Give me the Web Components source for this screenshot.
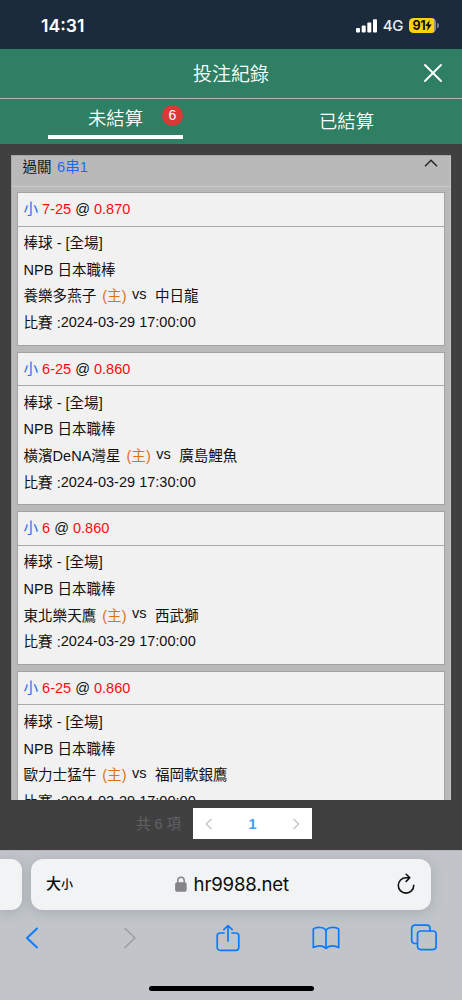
<!DOCTYPE html>
<html lang="zh-Hant">
<head>
<meta charset="utf-8">
<meta name="viewport" content="width=device-width, initial-scale=1">
<title>投注紀錄</title>
<style>
  html, body { margin: 0; height: 100%; overflow: hidden; }
  body { font: 14.55px "Liberation Sans", "Noto Sans CJK TC", sans-serif; }
</style>
</head>
<body>
<bet-app></bet-app>

<script>
(function () {
  // small base: every element just renders its template into an open root
  class Base extends HTMLElement {
    connectedCallback() {
      if (this.shadowRoot) return;
      this.attachShadow({ mode: 'open' }).innerHTML = this.render();
    }
    attr(n) { return this.getAttribute(n) || ''; }
  }

  class StatusBar extends Base {
    render() {
      return `
        <style>
          :host { display:flex; box-sizing:border-box; height:49px; flex:none; background:#1b2b3c; color:#fff;
                  padding:2px 23px 0 41px; justify-content:space-between; align-items:center;
                  font-family:Inter,sans-serif; }
          .time { font-size:17.6px; font-weight:600; }
          .right { display:flex; align-items:center; }
          .net { font-size:15px; font-weight:500; margin:0 6px 0 6px; letter-spacing:-.4px; color:#e9ecee; }
          .bat { display:flex; align-items:center; justify-content:center; width:27px; height:15px; border-radius:4.5px;
                 background:linear-gradient(90deg,#fdd20b 91%,#8d9085 91%); color:#111; font-size:12.5px; font-weight:700; letter-spacing:-.3px; }
          .cap { width:2px; height:5px; margin-left:1px; border-radius:0 2px 2px 0; background:#76808a; }
          svg { display:block; }
        </style>
        <span class="time">14:31</span>
        <div class="right">
          <svg width="21" height="14" viewBox="0 0 21 14" fill="#fff">
            <rect x="0" y="9" width="4" height="4.6" rx="1"/><rect x="5.7" y="6.6" width="4" height="7" rx="1"/>
            <rect x="11.3" y="3.6" width="4" height="10" rx="1"/><rect x="17" y="0.3" width="4" height="13.3" rx="1"/>
          </svg>
          <span class="net">4G</span>
          <span class="bat">91<svg width="7" height="11" viewBox="0 0 7 11"><path d="M4.7 0 .2 6h2.7L2 11l4.8-6.4H4z" fill="#111"/></svg></span>
          <span class="cap"></span>
        </div>`;
    }
  }

  class PageHeader extends Base {
    render() {
      return `
        <style>
          :host { display:grid; grid-template-columns:60px 1fr 60px; height:49px; flex:none; align-items:center;
                  background:#2e7f63; color:#fff; border-bottom:1px solid #a9b8b0; }
          .title { grid-column:2; text-align:center; font-size:19px; font-weight:350; padding-bottom:2px; }
          svg { display:block; justify-self:center; margin:0 0 2px 2px; }
        </style>
        <span class="title"><slot></slot></span>
        <svg width="20" height="20" viewBox="0 0 20 20" fill="none" stroke="#fff" stroke-width="1.9" stroke-linecap="round"><path d="M2 2 18 18M18 2 2 18"/></svg>`;
    }
  }

  class TabItem extends Base {
    render() {
      return `
        <style>
          :host { display:flex; flex:1; justify-content:center; position:relative; color:#fff; font-size:18.3px; font-weight:350; line-height:26px; padding-top:10px; }
          :host([active]) { padding-top:7px; }
          .tab { display:flex; flex-direction:column; align-items:center; }
          .bar { width:134.5px; height:3.5px; background:#fff; margin-top:3px; }
          .badge { position:absolute; left:162px; top:6px; width:21px; height:21px; border-radius:50%; background:#d93a35;
                   font-size:14px; line-height:20px; text-align:center; }
        </style>
        <div class="tab"><slot></slot>${this.hasAttribute('active') ? '<span class="bar"></span>' : ''}</div>
        ${this.attr('count') ? `<span class="badge">${this.attr('count')}</span>` : ''}`;
    }
  }

  class BetCard extends Base {
    render() {
      return `
        <style>
          :host { display:block; box-sizing:border-box; height:153.6px; flex:none; background:#f1f1f1;
                  border:1px solid #a3a3a3; padding:0; color:#111; }
          .head { display:flex; gap:4px; align-items:center; box-sizing:border-box; height:33.5px; padding-left:5.5px; border-bottom:1px solid #a9a9a9; }
          .pick { color:#1a6bf5; padding-bottom:3px; }
          .odds { color:#fb0d0d; }
          .body { padding:2px 0 0 5.5px; }
          .row { display:flex; align-items:center; height:26.6px; white-space:pre; }
          .home { color:#de7210; margin:0 5.5px 0 6px; }
          .vs { margin-right:8.4px; padding-bottom:2px; }
          .date { padding-top:1px; }
        </style>
        <div class="head"><span class="pick">小</span><span class="odds">${this.attr('line')}</span><span>@</span><span class="odds">${this.attr('odds')}</span></div>
        <div class="body">
          <div class="row">棒球 - [全場]</div>
          <div class="row">NPB 日本職棒</div>
          <div class="row"><span>${this.attr('home')}</span><span class="home">(主)</span><span class="vs">vs</span><span>${this.attr('away')}</span></div>
          <div class="row"><span>比賽 :</span><span class="date">${this.attr('date')}</span></div>
        </div>`;
    }
  }

  class BetGroup extends Base {
    render() {
      return `
        <style>
          :host { display:flex; flex-direction:column; box-sizing:border-box; height:645px; margin:11px 11px 0; overflow:hidden;
                  background:#b9b9b9; border-left:1px solid #a9a9a9; border-right:1px solid #c6c6c6; border-top:1px solid #a6a6a6; }
          .top { display:flex; flex:none; box-sizing:border-box; height:31px; padding:0 12px 11px 10.5px; align-items:center; gap:5.5px; border-bottom:1px solid #c9c9c9; color:#161616; }
          .kind { color:#1a6bf5; flex:1; }
          .top svg { display:block; margin-bottom:5px; }
          .list { display:flex; flex-direction:column; gap:6px; padding:5px 5px 0; }
        </style>
        <div class="top"><span>過關</span><span class="kind">${this.attr('kind')}</span>
          <svg width="14" height="8" viewBox="0 0 14 8" fill="none" stroke="#222" stroke-width="1.4"><path d="M1 7.2 7 1.2l6 6"/></svg>
        </div>
        <div class="list"><slot></slot></div>`;
    }
  }

  class PagerBar extends Base {
    render() {
      return `
        <style>
          :host { display:flex; align-items:center; height:31px; margin:8px 0 0 136px; gap:12px; }
          .total { color:#606266; font-size:14.5px; padding-bottom:2px; width:45px; white-space:nowrap; }
          .pages { display:flex; box-sizing:border-box; width:119px; height:31px; padding:0 12px; align-items:center; justify-content:space-between; background:#fff; }
          .num { color:#409eff; font-size:14.5px; font-weight:700; }
        </style>
        <span class="total">共 6 項</span>
        <div class="pages">
          <svg width="8" height="12" viewBox="0 0 8 12" fill="none" stroke="#c0c4cc" stroke-width="1.4"><path d="M6.5 1 1.3 6l5.2 5"/></svg>
          <span class="num">1</span>
          <svg width="8" height="12" viewBox="0 0 8 12" fill="none" stroke="#c0c4cc" stroke-width="1.4"><path d="M1.5 1 6.7 6l-5.2 5"/></svg>
        </div>`;
    }
  }

  class BrowserBar extends Base {
    render() {
      return `
        <style>
          :host { display:flex; flex-direction:column; flex:none; box-sizing:border-box; height:150px; overflow:hidden; background:#c1c5ca; border-top:1px solid #b1b5b9; }
          .address { display:flex; gap:9px; padding-top:8px; }
          .prev, .url { height:50.5px; background:#f1f3f4; box-shadow:0 2px 12px rgba(70,80,90,.22); }
          .prev { width:22px; border-radius:0 11px 11px 0; }
          .url { display:flex; box-sizing:border-box; width:400px; border-radius:12px; align-items:center; justify-content:space-between; padding:0 15px 0 15px; color:#0c0c0c; }
          .size { display:flex; align-items:baseline; width:22px; white-space:nowrap; padding-bottom:3px; font:500 15px "Noto Sans CJK TC",sans-serif; }
          .size small { font-size:12px; }
          .host { display:flex; align-items:center; gap:6.5px; font:400 18.6px Inter,sans-serif; letter-spacing:-.15px; }
          .tools { display:flex; justify-content:space-between; align-items:center; height:32px; padding:12px 24px 0 18px; }
          .tools svg { width:28px; }
          .home { align-self:center; width:165px; height:5px; border-radius:3px; background:#000; margin-top:32px; }
          svg { display:block; fill:none; stroke:#0a7aff; stroke-width:1.7; stroke-linecap:round; stroke-linejoin:round; }
        </style>
        <div class="address">
          <div class="prev"></div>
          <div class="url">
            <span class="size">大<small>小</small></span>
            <span class="host">
              <svg width="12" height="16" viewBox="0 0 12 16" style="stroke:#858589;stroke-width:1.5"><path d="M2.8 8V4.4a3.2 3.2 0 0 1 6.4 0V8"/><rect x=".9" y="7.1" width="10" height="7.8" rx="1" fill="#858589"/></svg>
              hr9988.net
            </span>
            <svg width="20" height="22" viewBox="0 0 20 22" style="stroke:#111;stroke-width:1.6"><path d="M17.7 12.4a7.7 7.7 0 1 1-7.700-7.700h3.300M10.200 1.300l3.600 3.500-3.600 3.600"/></svg>
          </div>
        </div>
        <div class="tools">
          <svg height="22" viewBox="0 0 16 22" style="stroke-width:1.9"><path d="M13 1.500 3 11l10 9.500"/></svg>
          <svg height="22" viewBox="0 0 16 22" style="stroke:#9b9fa4;stroke-width:1.6"><path d="M3 1.500 13 11 3 20.500"/></svg>
          <svg height="28" viewBox="0 0 24 28"><path d="M8 9H4a2.800 2.800 0 0 0-2.800 2.800v11.700A2.800 2.800 0 0 0 4 26.300h16a2.800 2.800 0 0 0 2.800-2.800V11.800A2.800 2.800 0 0 0 20 9h-4M12 17V1.500M7.800 5.700 12 1.500l4.200 4.200"/></svg>
          <svg height="24" viewBox="0 0 28 24"><path d="M14 4.500C12 .8 4.500.7 1.300 3v18.500c4.200-2.400 9.700-2.400 12.700.8 3-3.200 8.500-3.200 12.700-.8V3C23.500.7 16 .8 14 4.500zM14 4.500v17.800"/></svg>
          <svg height="27" viewBox="0 0 27 27"><path d="M7 19.500H4.200a3 3 0 0 1-3-3V4.200a3 3 0 0 1 3-3h12.300a3 3 0 0 1 3 3V7"/><rect x="7" y="7" width="18.600" height="18.600" rx="3"/></svg>
        </div>
        <div class="home"></div>`;
    }
  }

  class BetApp extends Base {
    render() {
      return `
        <style>
          :host { display:flex; flex-direction:column; width:462px; height:1000px; overflow:hidden; background:#404040; }
          .tabs { display:flex; flex:none; height:45px; background:#2e7f63; }
          main { display:block; flex:1; min-height:0; }
        </style>
        <status-bar></status-bar>
        <page-header>投注紀錄</page-header>
        <div class="tabs"><tab-item active count="6">未結算</tab-item><tab-item>已結算</tab-item></div>
        <main>
          <bet-group kind="6串1">
            <bet-card line="7-25" odds="0.870" home="養樂多燕子" away="中日龍" date="2024-03-29 17:00:00"></bet-card>
            <bet-card line="6-25" odds="0.860" home="橫濱DeNA灣星" away="廣島鯉魚" date="2024-03-29 17:30:00"></bet-card>
            <bet-card line="6" odds="0.860" home="東北樂天鷹" away="西武獅" date="2024-03-29 17:00:00"></bet-card>
            <bet-card line="6-25" odds="0.860" home="歐力士猛牛" away="福岡軟銀鷹" date="2024-03-29 17:00:00"></bet-card>
          </bet-group>
          <pager-bar></pager-bar>
        </main>
        <browser-bar></browser-bar>`;
    }
  }

  customElements.define('status-bar', StatusBar);
  customElements.define('page-header', PageHeader);
  customElements.define('tab-item', TabItem);
  customElements.define('bet-card', BetCard);
  customElements.define('bet-group', BetGroup);
  customElements.define('pager-bar', PagerBar);
  customElements.define('browser-bar', BrowserBar);
  customElements.define('bet-app', BetApp);
})();
</script>
</body>
</html>
